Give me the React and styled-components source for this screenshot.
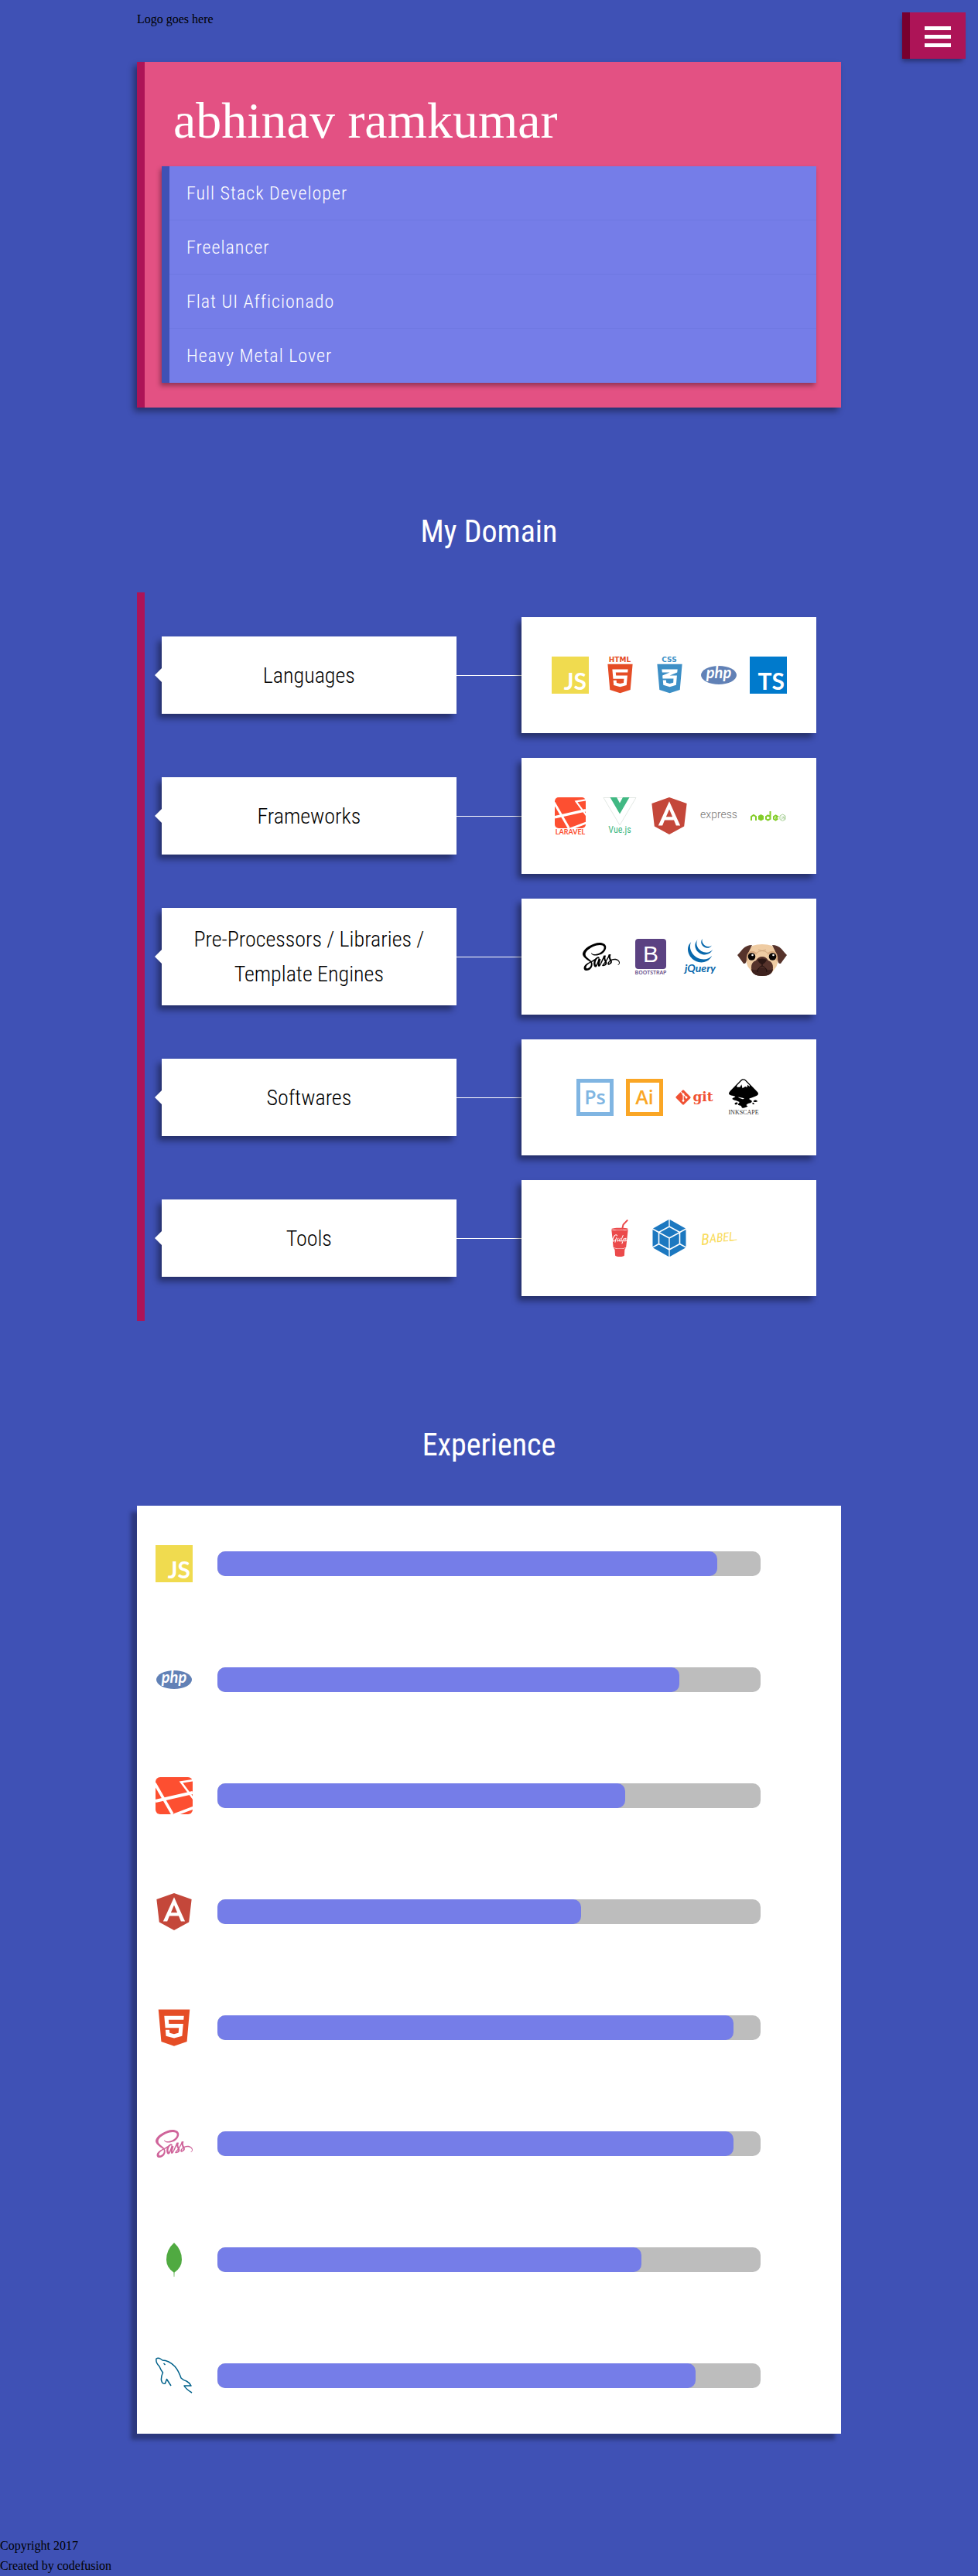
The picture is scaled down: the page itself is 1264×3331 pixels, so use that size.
import React from 'react';
import styled, { createGlobalStyle } from 'styled-components';
import { FaSass, FaHtml5, FaCss3Alt, FaGulp, FaGitAlt } from 'react-icons/fa';
import { SiInkscape, SiJquery } from 'react-icons/si';

const condensed = '"Roboto Condensed", "Liberation Sans Narrow", Roboto, sans-serif';

const GlobalStyle = createGlobalStyle`
  *, *::before, *::after { box-sizing: border-box; }
  body {
    margin: 0;
    background: #3f51b5;
    color: #000;
    font-family: "Liberation Serif", "Times New Roman", serif;
    font-size: 16px;
    line-height: 26px;
  }
`;

const Header = styled.header`
  display: flex;
  align-items: flex-start;
  justify-content: space-between;
  height: 80px;
  padding: 0 16px 0 14%;
`;

const Logo = styled.div`
  padding-top: 12px;
`;

const MenuButton = styled.button`
  display: flex;
  flex-direction: column;
  align-items: center;
  justify-content: center;
  gap: 6px;
  width: 82px;
  height: 60px;
  margin: 16px 0 0;
  padding: 3px 0 0;
  border: 0;
  border-left: 10px solid #78002e;
  background: #ad1457;
  box-shadow: -2px 5px 6px -2px rgba(0, 0, 0, 0.4);
  cursor: pointer;
`;

const MenuLine = styled.span`
  width: 34px;
  height: 5px;
  background: #fff;
`;

const Main = styled.main`
  width: 72%;
  margin: 0 auto;
`;

const Hero = styled.section`
  padding: 24px 32px 32px 22px;
  border-left: 10px solid #ad1457;
  background: #e35183;
  box-shadow: -4px 5px 8px rgba(0, 0, 0, 0.4);
`;

const Name = styled.h1`
  margin: 0;
  padding: 0 15px 8px;
  color: #fff;
  font-size: 66px;
  font-weight: 400;
  line-height: 103px;
`;

const Roles = styled.ul`
  margin: 0;
  padding: 0;
  list-style: none;
  border-left: 10px solid #3f51b5;
  background: #757de8;
  box-shadow: -2px 4px 6px rgba(0, 0, 0, 0.35);
`;

const Role = styled.li`
  padding: 16px 22px;
  color: #fff;
  font-family: ${condensed};
  font-size: 24px;
  font-weight: 300;
  letter-spacing: 1px;
  line-height: 38px;

  & + & {
    box-shadow: 0 -1px 0 rgba(63, 81, 181, 0.12);
  }
`;

const SectionTitle = styled.h2`
  margin: 0;
  padding: 129px 0 46px;
  color: #fff;
  font-family: ${condensed};
  font-size: 40px;
  font-weight: 400;
  line-height: 64px;
  text-align: center;
`;

const Domains = styled.div`
  display: flex;
  flex-direction: column;
  gap: 32px;
  padding: 32px 32px 32px 22px;
  border-left: 10px solid #ad1457;
`;

const DomainRow = styled.div`
  display: grid;
  grid-template-columns: 9fr 2fr 9fr;
  align-items: center;
`;

const DomainLabel = styled.h3`
  position: relative;
  display: flex;
  align-items: center;
  justify-content: center;
  min-height: 100px;
  margin: 0;
  padding: 18px 24px;
  background: #fff;
  box-shadow: -5px 6px 8px rgba(0, 0, 0, 0.42);
  font-family: ${condensed};
  font-size: 28px;
  font-weight: 300;
  line-height: 45px;
  text-align: center;

  &::before {
    content: "";
    position: absolute;
    top: calc(50% - 9px);
    right: 100%;
    border: 9px solid transparent;
    border-left-width: 0;
    border-right-color: #fff;
  }
`;

const Connector = styled.div`
  height: 1px;
  background: #fff;
`;

const LogoCard = styled.div`
  display: flex;
  align-items: center;
  justify-content: center;
  gap: 16px;
  height: 150px;
  background: #fff;
  box-shadow: -5px 6px 8px rgba(0, 0, 0, 0.42);
`;

const Mark = styled.svg`
  display: block;
  flex: none;
  width: 48px;
  height: 48px;
  overflow: visible;
`;

const WideMark = styled(Mark)`
  width: 64px;
  margin: 0 -40px 0 8px;
`;

const Skills = styled.div`
  background: #fff;
  box-shadow: -8px 8px 5px rgba(0, 0, 0, 0.3);
`;

const Skill = styled.div`
  display: flex;
  align-items: center;
  gap: 32px;
  height: 150px;
  padding: 0 104px 0 24px;
`;

const Track = styled.div`
  flex: 1;
  height: 32px;
  border-radius: 10px;
  background: #bdbdbd;
`;

const Fill = styled.div`
  width: ${(p) => p.$level}%;
  height: 100%;
  border-radius: 10px;
  background: #757de8;
`;

const Footer = styled.footer`
  padding-top: 132px;
`;

const Line = styled.p`
  margin: 0;
`;

const sans = 'Lato, "Open Sans", sans-serif';

const JsMark = () => (
  <Mark viewBox="0 0 48 48" role="img" aria-label="JavaScript">
    <rect width="48" height="48" fill="#f0db4f" />
    <text x="45" y="43" textAnchor="end" fontFamily={sans} fontWeight="700" fontSize="30" fill="#fff">JS</text>
  </Mark>
);

const TsMark = () => (
  <Mark viewBox="0 0 48 48" role="img" aria-label="TypeScript">
    <rect width="48" height="48" fill="#007acc" />
    <text x="45" y="43" textAnchor="end" fontFamily={sans} fontWeight="700" fontSize="30" fill="#fff">TS</text>
  </Mark>
);

const HtmlMark = () => (
  <Mark viewBox="0 0 48 48" role="img" aria-label="HTML5">
    <text x="24" y="7" textAnchor="middle" fontFamily="DejaVu Sans, sans-serif" fontWeight="700" fontSize="9" fill="#e54d26">HTML</text>
    <FaHtml5 x="3" y="7" size={43} color="#e54d26" />
  </Mark>
);

const CssMark = () => (
  <Mark viewBox="0 0 48 48" role="img" aria-label="CSS3">
    <text x="24" y="7" textAnchor="middle" fontFamily="DejaVu Sans, sans-serif" fontWeight="700" fontSize="9" fill="#3d8fc6">CSS</text>
    <FaCss3Alt x="3" y="7" size={43} color="#3d8fc6" />
  </Mark>
);

const PhpMark = () => (
  <Mark viewBox="0 0 48 48" role="img" aria-label="PHP">
    <ellipse cx="24" cy="24" rx="23" ry="12" fill="#6181b6" />
    <text x="24" y="28" textAnchor="middle" fontFamily={sans} fontStyle="italic" fontWeight="700" fontSize="20" fill="#fff">php</text>
  </Mark>
);

const LaravelShape = () => (
  <>
    <rect width="48" height="48" rx="6" fill="#fd4f31" />
    <g fill="none" stroke="#fff">
      <path d="M-1 8 L22 48" strokeWidth="3.6" />
      <path d="M0 31 L48 20" strokeWidth="4" />
      <path d="M49 4 L33 6.5 L49 28" strokeWidth="2.6" />
      <path d="M24 49 L49 39.500" strokeWidth="3.6" />
    </g>
  </>
);

const LaravelIcon = () => (
  <Mark viewBox="0 0 48 48" role="img" aria-label="Laravel">
    <LaravelShape />
  </Mark>
);

const LaravelMark = () => (
  <Mark viewBox="0 0 48 48" role="img" aria-label="Laravel">
    <svg x="4" y="0" width="40" height="40" viewBox="0 0 48 48"><LaravelShape /></svg>
    <text x="24" y="48" textAnchor="middle" fontFamily={sans} fontWeight="700" fontSize="9" fill="#fd4f31">LARAVEL</text>
  </Mark>
);

const VueMark = () => (
  <Mark viewBox="0 0 48 48" role="img" aria-label="Vue.js">
    <path d="M3 0.500H45L24 36Z" fill="none" stroke="#d5ded9" strokeWidth="0.7" />
    <path d="M11.500 0H20L24 7.500L28 0H36.500L24 21.500Z" fill="#41b883" />
    <text x="24" y="46" textAnchor="middle" fontFamily={condensed} fontSize="12" fill="#41b883">Vue.js</text>
  </Mark>
);

const AngularMark = () => (
  <Mark viewBox="0 0 24 24" role="img" aria-label="Angular">
    <path fill="#c4473a" d="M9.931 12.645h4.138l-2.07-4.908m0-7.737L.68 3.982l1.726 14.771L12 24l9.596-5.242L23.32 3.984 11.999.001zm7.064 18.31h-2.638l-1.422-3.503H8.996l-1.422 3.504h-2.64L12 2.65z" />
  </Mark>
);

const ExpressMark = () => (
  <Mark viewBox="0 0 48 48" role="img" aria-label="Express">
    <text x="24" y="27" textAnchor="middle" fontFamily="Roboto, sans-serif" fontWeight="300" fontSize="14" fill="#777">express</text>
  </Mark>
);

const NodeMark = () => (
  <Mark viewBox="0 0 48 48" role="img" aria-label="Node.js">
    <g fill="none" stroke="#83cd29" strokeWidth="2">
      <path d="M2 30V25L5 23L8 25V30" />
      <path d="M26.500 18V28L23.500 29.500L21 28V25L23.500 23.500L26.500 25" />
      <path d="M36.500 27.500L33.500 29.500L31 28V25L33.500 23.500L36 25L33 27.500" />
    </g>
    <path d="M14.500 22L18 24V28.500L14.500 30.500L11 28.500V24Z" fill="#83cd29" />
    <path d="M42.500 22L46 24V28.500L42.500 30.500L39 28.500V24Z" fill="none" stroke="#9dc98a" strokeWidth="0.900" />
    <path d="M42 24.500V28L41 28.500M45 25H43.500V26.500H45V28H43.500" fill="none" stroke="#9dc98a" strokeWidth="0.800" />
  </Mark>
);

const SassMark = ({ color = '#000' }) => (
  <Mark viewBox="0 0 48 48" role="img" aria-label="Sass">
    <FaSass size={48} color={color} />
  </Mark>
);

const BootstrapMark = () => (
  <Mark viewBox="0 0 48 48" role="img" aria-label="Bootstrap">
    <rect x="4" y="1" width="40" height="39" rx="4" fill="#5b4282" />
    <text x="24" y="31" textAnchor="middle" fontFamily="Liberation Sans, Arial, sans-serif" fontSize="30" fill="#fff">B</text>
    <text x="24" y="47" textAnchor="middle" fontFamily="Open Sans, sans-serif" fontWeight="600" fontSize="7" fill="#5b4282">BOOTSTRAP</text>
  </Mark>
);

const JqueryMark = () => (
  <Mark viewBox="0 0 48 48" role="img" aria-label="jQuery">
    <SiJquery x="8" y="0" size={32} color="#0868ac" />
    <text x="24" y="44" textAnchor="middle" fontFamily={sans} fontStyle="italic" fontWeight="700" fontSize="14" fill="#0868ac">jQuery</text>
  </Mark>
);

const PugMark = () => (
  <WideMark viewBox="0 0 64 48" role="img" aria-label="Pug">
    <path d="M19 10Q32 6 45 10L53 20Q54 34 48 40Q43 49 32 49Q21 49 16 40Q10 34 11 20Z" fill="#efcca3" />
    <path d="M19 9Q12 9 7 14Q3 19 0 22Q3 26 8 33Q12 34 12 26Q14 18 19 9Z" fill="#56332b" />
    <path d="M45 9Q52 9 57 14Q61 19 64 22Q61 26 56 33Q52 34 52 26Q50 18 45 9Z" fill="#56332b" />
    <path d="M13 29Q12 20 17 18Q22 17 25 21M51 29Q52 20 47 18Q42 17 39 21" fill="none" stroke="#d9ac82" strokeWidth="2" />
    <path d="M27 15Q32 18 37 15M25 19Q32 14 39 19" fill="none" stroke="#c99f77" strokeWidth="0.800" />
    <path d="M32 24Q37 24 40 29Q46 31 46 38Q46 49 32 49Q18 49 18 38Q18 31 24 29Q27 24 32 24Z" fill="#56332b" />
    <path d="M18 40Q21 42 25 41Q32 35 39 41Q43 42 46 40Q45 49 32 49Q19 49 18 40Z" fill="#3d211d" />
    <path d="M26 28Q32 25 38 28Q36 33 32 34Q28 33 26 28Z" fill="#2c1714" />
    <path d="M32 33V36Q26 38 26 44M32 36Q38 38 38 44" fill="none" stroke="#1e0e0c" strokeWidth="1" />
    <circle cx="18.500" cy="24" r="4.800" fill="#0a0605" />
    <circle cx="45.500" cy="24" r="4.800" fill="#0a0605" />
    <circle cx="19.500" cy="22" r="1.300" fill="#fff" />
    <circle cx="46.500" cy="22" r="1.300" fill="#fff" />
  </WideMark>
);

const AdobeMark = ({ label, text, color }) => (
  <Mark viewBox="0 0 48 48" role="img" aria-label={label}>
    <rect x="2.500" y="2.500" width="43" height="43" fill="#fff" stroke={color} strokeWidth="5" />
    <text x="24" y="33" textAnchor="middle" fontFamily="Open Sans, sans-serif" fontWeight="600" fontSize="25" fill={color}>{text}</text>
  </Mark>
);

const GitMark = () => (
  <Mark viewBox="0 0 48 48" role="img" aria-label="Git">
    <FaGitAlt x="-1" y="13" size={22} color="#f05133" />
    <text x="35.500" y="29" textAnchor="middle" fontFamily="DejaVu Serif, serif" fontWeight="700" fontSize="17" fill="#f05133">git</text>
  </Mark>
);

const InkscapeMark = () => (
  <Mark viewBox="0 0 48 48" role="img" aria-label="Inkscape">
    <SiInkscape x="5" y="0" size={38} color="#000" />
    <text x="24" y="46" textAnchor="middle" fontFamily="Liberation Serif, serif" fontSize="8" fill="#333">INKSCAPE</text>
  </Mark>
);

const GulpMark = () => (
  <Mark viewBox="0 0 48 48" role="img" aria-label="Gulp">
    <FaGulp x="0" y="0" size={48} color="#eb4a4b" />
  </Mark>
);

const WebpackMark = () => (
  <Mark viewBox="0 0 48 48" role="img" aria-label="webpack">
    <g fill="#1c78c0">
      <path d="M23.300 0V8.500L10.500 15.500L3 11.500Z" />
      <path d="M24.700 0V8.500L37.500 15.500L45 11.500Z" />
      <path d="M2.500 13L9.700 17V31L2.500 35Z" />
      <path d="M45.500 13L38.300 17V31L45.500 35Z" />
      <path d="M3 36.500L10.500 32.500L23.300 39.500V48Z" />
      <path d="M45 36.500L37.500 32.500L24.700 39.500V48Z" />
      <path d="M24 10L36 16.500L24 23L12 16.500Z" />
      <path d="M11.300 18L23.300 24.500V37.500L11.300 31Z" />
      <path d="M36.700 18L24.700 24.500V37.500L36.700 31Z" />
    </g>
  </Mark>
);

const BabelMark = () => (
  <Mark viewBox="0 0 48 48" role="img" aria-label="Babel">
    <g transform="rotate(-5 24 24)" fontFamily={condensed} fontStyle="italic" fill="#f9dc5c">
      <text x="1" y="31" fontSize="20">B</text>
      <text x="12" y="29" fontSize="16">ABEL</text>
      <path d="M38 28.500L47 28" stroke="#f9dc5c" strokeWidth="1.200" />
    </g>
  </Mark>
);

const MongoMark = () => (
  <Mark viewBox="0 0 48 48" role="img" aria-label="MongoDB">
    <path d="M24 2Q34 11 34 24Q34 34 24.500 40.500L24.300 46H23.700L23.500 40.500Q14 34 14 24Q14 11 24 2Z" fill="#50aa41" />
  </Mark>
);

const MysqlMark = () => (
  <Mark viewBox="0 0 48 48" role="img" aria-label="MySQL">
    <path
      d="M20 37L14.500 28.500L12.500 34Q9 35.500 7.500 30Q7 25 9.500 20Q7 17 5 12Q0 7 1 2Q4 0 9 4Q17 4 25 12Q30 18 33 27Q36 30 40 31Q44 33 46 37Q42 37 37 37Q39 41 47 46"
      fill="none"
      stroke="#00618a"
      strokeWidth="1.500"
      strokeLinejoin="round"
    />
    <path d="M10.500 8L12.500 10" stroke="#00618a" strokeWidth="1.400" />
  </Mark>
);

const HtmlIcon = () => (
  <Mark viewBox="0 0 48 48" role="img" aria-label="HTML5">
    <FaHtml5 x="-3" y="-3" size={54} color="#e54d26" />
  </Mark>
);

const domains = [
  { name: 'Languages', logos: [<JsMark />, <HtmlMark />, <CssMark />, <PhpMark />, <TsMark />] },
  { name: 'Frameworks', logos: [<LaravelMark />, <VueMark />, <AngularMark />, <ExpressMark />, <NodeMark />] },
  { name: 'Pre-Processors / Libraries / Template Engines', logos: [<SassMark />, <BootstrapMark />, <JqueryMark />, <PugMark />] },
  {
    name: 'Softwares',
    logos: [
      <AdobeMark label="Photoshop" text="Ps" color="#80b5e2" />,
      <AdobeMark label="Illustrator" text="Ai" color="#faa625" />,
      <GitMark />,
      <InkscapeMark />,
    ],
  },
  { name: 'Tools', logos: [<GulpMark />, <WebpackMark />, <BabelMark />] },
];

const skills = [
  { name: 'JavaScript', icon: <JsMark />, level: 92 },
  { name: 'PHP', icon: <PhpMark />, level: 85 },
  { name: 'Laravel', icon: <LaravelIcon />, level: 75 },
  { name: 'Angular', icon: <AngularMark />, level: 67 },
  { name: 'HTML5', icon: <HtmlIcon />, level: 95 },
  { name: 'Sass', icon: <SassMark color="#cf649a" />, level: 95 },
  { name: 'MongoDB', icon: <MongoMark />, level: 78 },
  { name: 'MySQL', icon: <MysqlMark />, level: 88 },
];

export default function App() {
  return (
    <>
      <GlobalStyle />
      <Header>
        <Logo>Logo goes here</Logo>
        <MenuButton type="button" aria-label="Open menu">
          <MenuLine />
          <MenuLine />
          <MenuLine />
        </MenuButton>
      </Header>
      <Main>
        <Hero>
          <Name>abhinav ramkumar</Name>
          <Roles>
            <Role>Full Stack Developer</Role>
            <Role>Freelancer</Role>
            <Role>Flat UI Afficionado</Role>
            <Role>Heavy Metal Lover</Role>
          </Roles>
        </Hero>
        <section>
          <SectionTitle>My Domain</SectionTitle>
          <Domains>
            {domains.map((d) => (
              <DomainRow key={d.name}>
                <DomainLabel>{d.name}</DomainLabel>
                <Connector />
                <LogoCard>
                  {d.logos.map((logo, i) => (
                    <React.Fragment key={i}>{logo}</React.Fragment>
                  ))}
                </LogoCard>
              </DomainRow>
            ))}
          </Domains>
        </section>
        <section>
          <SectionTitle>Experience</SectionTitle>
          <Skills>
            {skills.map((s) => (
              <Skill key={s.name}>
                {s.icon}
                <Track role="progressbar" aria-label={s.name} aria-valuenow={s.level} aria-valuemin={0} aria-valuemax={100}>
                  <Fill $level={s.level} />
                </Track>
              </Skill>
            ))}
          </Skills>
        </section>
      </Main>
      <Footer>
        <Line>Copyright 2017</Line>
        <Line>Created by codefusion</Line>
      </Footer>
    </>
  );
}
